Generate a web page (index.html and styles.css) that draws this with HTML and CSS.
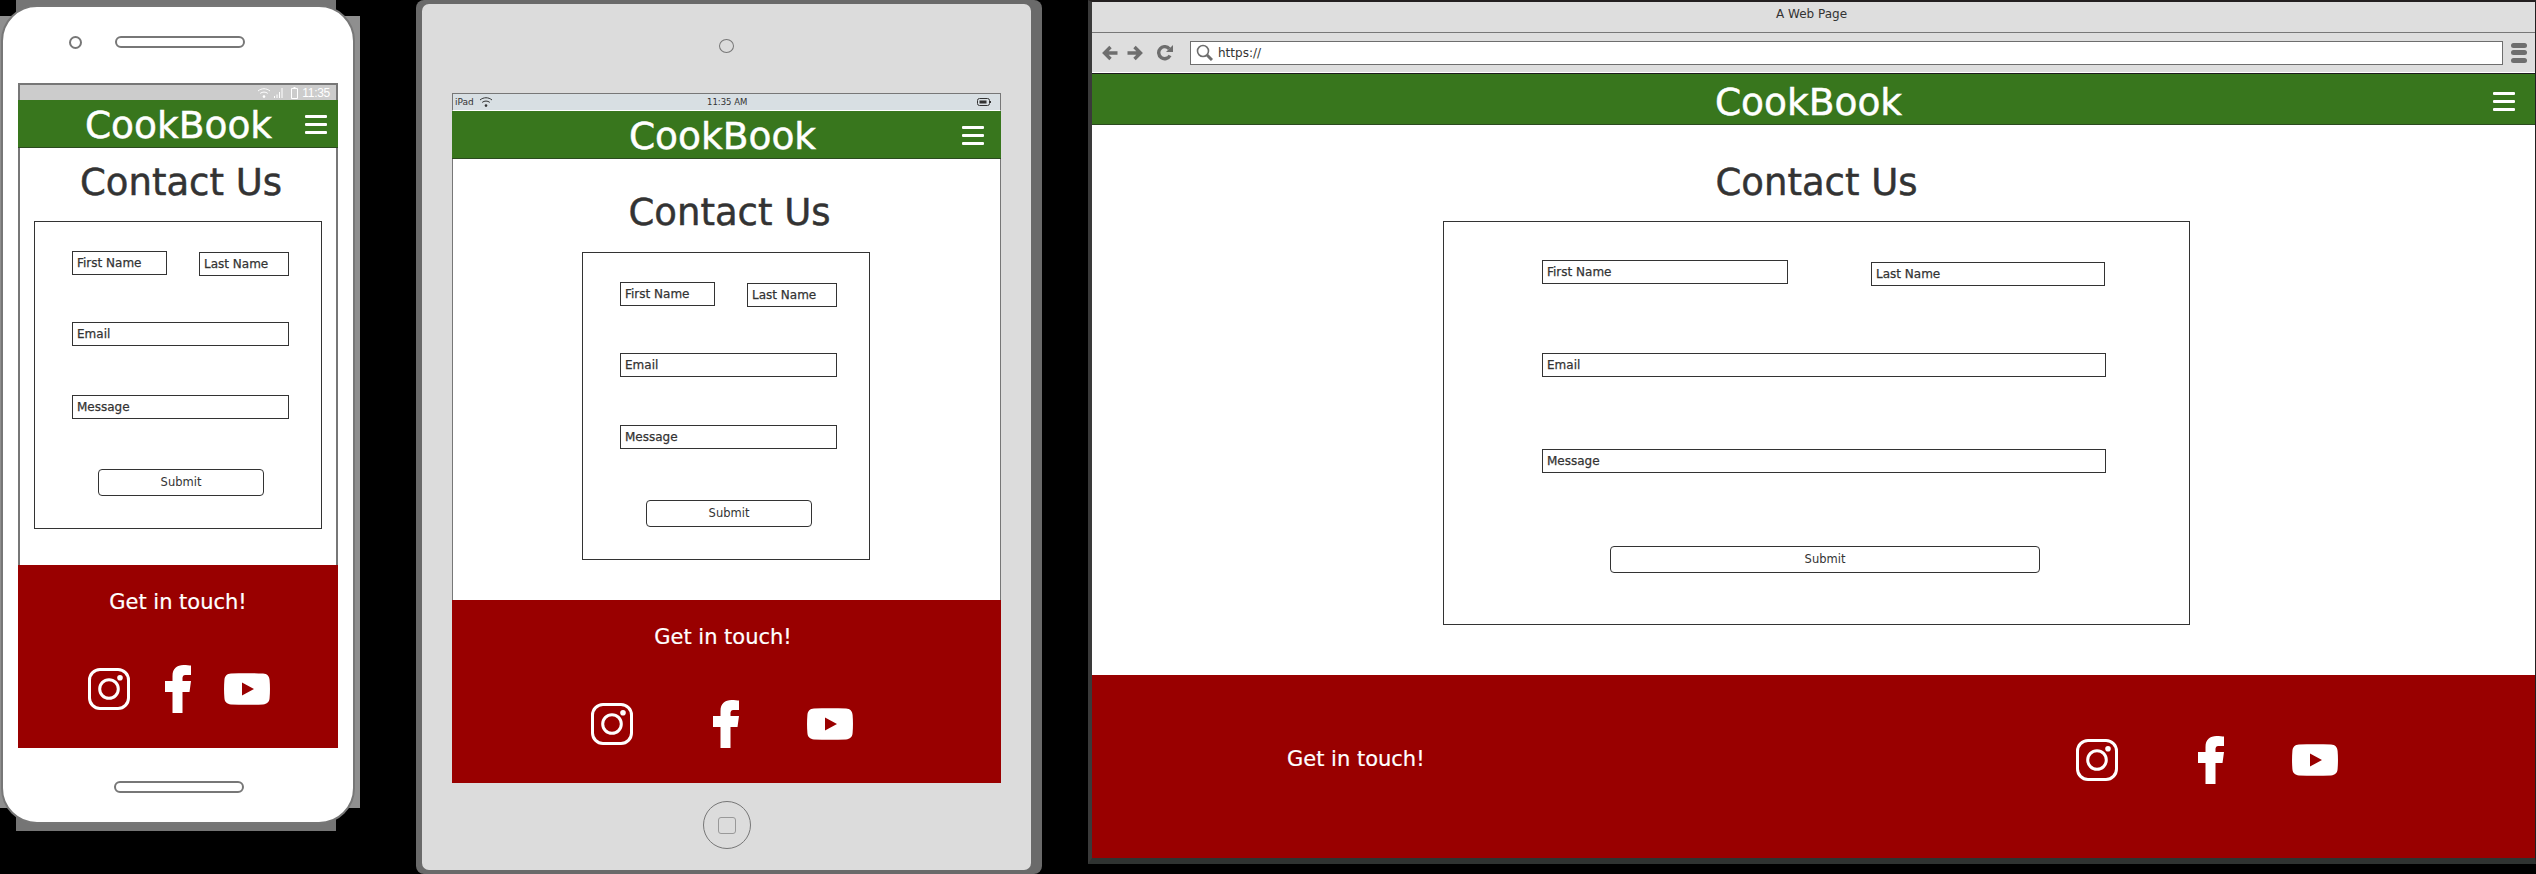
FILE: index.html
```html
<!DOCTYPE html>
<html lang="en">
  <head>
    <meta charset="UTF-8" />
    <meta name="viewport" content="width=device-width, initial-scale=1.0" />
    <title>CookBook Contact Wireframes</title>
    <link rel="stylesheet" href="styles.css">
  </head>
  <body>
    <svg class="icon-defs" aria-hidden="true">
      <symbol id="instagram" viewBox="0 0 42 42">
        <rect x="1.5" y="1.5" width="39" height="39" rx="10.5" fill="none" stroke="currentColor" stroke-width="3" />
        <circle cx="21" cy="21" r="9.3" fill="none" stroke="currentColor" stroke-width="3" />
        <circle cx="32" cy="9.8" r="2.8" fill="currentColor" />
      </symbol>
      <symbol id="facebook" viewBox="0 0 26 48">
        <path fill="currentColor" d="M7.5 48V27H0V16H7.5V11C7.5 3.5 12 0 18.5 0C21.5 0 24.5 .3 26 .6V10H21C18 10 17.5 11.5 17.5 14V16H26L24.5 27H17.5V48Z" />
      </symbol>
      <symbol id="youtube" viewBox="0 0 46 32">
        <path fill="currentColor" fill-rule="evenodd" d="M7 .6C17 0 29 0 39 .6C43 .9 45.3 3 45.6 7C46.1 13 46.1 19 45.6 25C45.3 29 43 31.1 39 31.4C29 32 17 32 7 31.4C3 31.1 .7 29 .4 25C-.1 19 -.1 13 .4 7C.7 3 3 .9 7 .6ZM18 9.5V22.5L30 16Z" />
      </symbol>
      <symbol id="wifi" viewBox="0 0 14 12">
        <path fill="none" stroke="currentColor" stroke-width="1" d="M1 4C4.5 1 9.5 1 13 4M3.2 6.4C5.5 4.6 8.5 4.6 10.8 6.4" />
        <circle cx="7" cy="9.6" r="1.3" fill="currentColor" />
      </symbol>
    </svg>

    <div class="phone-frame">
      <div class="phone">
        <div class="phone-top">
          <span class="phone-camera"></span>
          <span class="phone-speaker"></span>
        </div>
        <div class="screen">
          <div class="status-bar">
            <svg class="status-wifi"><use href="#wifi" /></svg>
            <svg class="status-signal" viewBox="0 0 11 10">
              <path fill="none" stroke="currentColor" d="M1.5 10V8M4 10V6.5M6.5 10V4M9 10V0" />
            </svg>
            <svg class="status-battery" viewBox="0 0 7 12">
              <path fill="none" stroke="currentColor" d="M.5 1.5H6.5V11.5H.5ZM2.5 .5H4.5" />
            </svg>
            <span class="status-time">11:35</span>
          </div>
          <header class="app-header">
            <div class="logo">CookBook</div>
            <div class="burger"><span></span><span></span><span></span></div>
          </header>
          <main class="page">
            <h1>Contact Us</h1>
            <div class="contact-form">
              <div class="name-row">
                <div class="field first-name">First Name</div>
                <div class="field last-name">Last Name</div>
              </div>
              <div class="field email">Email</div>
              <div class="field message">Message</div>
              <div class="submit">Submit</div>
            </div>
          </main>
          <footer class="app-footer">
            <div class="touch">Get in touch!</div>
            <div class="social">
              <svg class="icon-instagram"><use href="#instagram" /></svg>
              <svg class="icon-facebook"><use href="#facebook" /></svg>
              <svg class="icon-youtube"><use href="#youtube" /></svg>
            </div>
          </footer>
        </div>
        <span class="phone-speaker phone-speaker-bottom"></span>
      </div>
    </div>

    <div class="tablet-frame">
      <div class="tablet">
        <div class="tablet-camera"></div>
        <div class="screen">
          <div class="status-bar">
            <span class="status-carrier">iPad</span>
            <svg class="status-wifi"><use href="#wifi" /></svg>
            <span class="status-clock">11:35 AM</span>
            <svg class="status-battery" viewBox="0 0 14 8">
              <rect x=".5" y=".5" width="12" height="7" rx="2" fill="none" stroke="currentColor" />
              <rect x="2.5" y="2.5" width="7" height="3" fill="currentColor" />
              <rect x="13" y="3" width="1" height="2" fill="currentColor" />
            </svg>
          </div>
          <header class="app-header">
            <div class="logo">CookBook</div>
            <div class="burger"><span></span><span></span><span></span></div>
          </header>
          <main class="page">
            <h1>Contact Us</h1>
            <div class="contact-form">
              <div class="name-row">
                <div class="field first-name">First Name</div>
                <div class="field last-name">Last Name</div>
              </div>
              <div class="field email">Email</div>
              <div class="field message">Message</div>
              <div class="submit">Submit</div>
            </div>
          </main>
          <footer class="app-footer">
            <div class="touch">Get in touch!</div>
            <div class="social">
              <svg class="icon-instagram"><use href="#instagram" /></svg>
              <svg class="icon-facebook"><use href="#facebook" /></svg>
              <svg class="icon-youtube"><use href="#youtube" /></svg>
            </div>
          </footer>
        </div>
        <div class="home-button"><span></span></div>
      </div>
    </div>

    <div class="browser">
      <div class="title-bar">A Web Page</div>
      <div class="tool-bar">
        <svg class="nav-icon" viewBox="0 0 16 16">
          <path fill="none" stroke="currentColor" stroke-width="3.4" d="M15.5 8H3M8.5 2L2.5 8L8.5 14" />
        </svg>
        <svg class="nav-icon" viewBox="0 0 16 16">
          <path fill="none" stroke="currentColor" stroke-width="3.4" d="M.5 8H13M7.5 2L13.5 8L7.5 14" />
        </svg>
        <svg class="nav-icon reload" viewBox="0 0 16 16">
          <path fill="none" stroke="currentColor" stroke-width="3.4" d="M13 10.5A6 6 0 1 1 12.3 3.8" />
          <path fill="currentColor" d="M9 7L16 7L16 0Z" />
        </svg>
        <div class="address">
          <svg class="search-icon" viewBox="0 0 17 17">
            <circle cx="7" cy="7" r="5.5" fill="none" stroke="currentColor" stroke-width="1.6" />
            <path fill="none" stroke="currentColor" stroke-width="3" d="M11 11L16 16" />
          </svg>
          https://
        </div>
        <div class="browser-menu"><span></span><span></span><span></span></div>
      </div>
      <header class="app-header">
        <div class="logo">CookBook</div>
        <div class="burger"><span></span><span></span><span></span></div>
      </header>
      <main class="page">
        <h1>Contact Us</h1>
        <div class="contact-form">
          <div class="name-row">
            <div class="field first-name">First Name</div>
            <div class="field last-name">Last Name</div>
          </div>
          <div class="field email">Email</div>
          <div class="field message">Message</div>
          <div class="submit">Submit</div>
        </div>
      </main>
      <footer class="app-footer">
        <div class="touch">Get in touch!</div>
        <div class="social">
          <svg class="icon-instagram"><use href="#instagram" /></svg>
          <svg class="icon-facebook"><use href="#facebook" /></svg>
          <svg class="icon-youtube"><use href="#youtube" /></svg>
        </div>
      </footer>
    </div>
  </body>
</html>
```

FILE: styles.css
```css
* {
  box-sizing: border-box;
}

html,
body {
  margin: 0;
  padding: 0;
  height: 874px;
  overflow: hidden;
  background-color: #000;
  font-family: "DejaVu Sans", sans-serif;
  color: #333;
}

.icon-defs {
  display: none;
}

/* the three devices sit on a free canvas */
.phone-frame,
.tablet-frame,
.browser {
  position: absolute;
  top: 0;
}

/* phone */
.phone-frame {
  left: 0;
  width: 360px;
  height: 831px;
  padding: 5px 5px 7px 1px;
}

/* stepped grey shadow behind the phone */
.phone-frame::before,
.phone-frame::after {
  content: "";
  position: absolute;
  background-color: #757575;
}

.phone-frame::before {
  left: 16px;
  width: 320px;
  top: 0;
  bottom: 0;
}

.phone-frame::after {
  left: 0;
  right: 0;
  top: 16px;
  bottom: 23px;
  background-color: #8f8f8f;
}

.phone {
  position: relative;
  z-index: 1;
  width: 354px;
  height: 819px;
  background-color: #fff;
  border: 2px solid #777;
  border-radius: 36px;
}

.phone-top {
  display: flex;
  align-items: center;
  height: 14px;
  margin-top: 28px;
  padding-left: 66px;
  gap: 33px;
}

.phone-camera {
  width: 13px;
  height: 13px;
  border: 2px solid #777;
  border-radius: 50%;
}

.phone-speaker {
  display: block;
  width: 130px;
  height: 12px;
  border: 2px solid #777;
  border-radius: 6px;
}

.phone-speaker-bottom {
  margin: 33px 0 0 111px;
}

.phone .screen {
  width: 320px;
  margin: 34px 0 0 15px;
}

/* tablet */
.tablet-frame {
  left: 416px;
  width: 626px;
  height: 874px;
  padding: 4px 11px 4px 6px;
  background-color: #6a6a6a;
  border-radius: 8px;
}

.tablet {
  height: 866px;
  padding-top: 35px;
  background-color: #dcdcdc;
  border-radius: 7px;
}

.tablet-camera {
  width: 15px;
  height: 14px;
  margin: 0 auto 40px;
  border: 1px solid #777;
  border-radius: 50%;
}

.tablet .screen {
  width: 549px;
  margin-left: 30px;
}

.home-button {
  display: flex;
  align-items: center;
  justify-content: center;
  width: 48px;
  height: 48px;
  margin: 18px auto 0;
  border: 1px solid #777;
  border-radius: 50%;
}

.home-button span {
  width: 18px;
  height: 17px;
  border: 1.5px solid #999;
  border-radius: 3px;
}

/* browser window */
.browser {
  left: 1088px;
  width: 1448px;
  height: 864px;
  background-color: #fff;
  border-top: 2px solid #231f20;
  border-left: 4px solid #3a3a3a;
  border-right: 1px solid #231f20;
  border-bottom: 6px solid #2f3331;
}

.title-bar {
  height: 31px;
  padding-top: 4px;
  padding-right: 4px;
  background-color: #dedede;
  border-bottom: 1px solid #777;
  font-size: 12px;
  line-height: 16px;
  text-align: center;
}

.tool-bar {
  display: flex;
  align-items: center;
  height: 41px;
  padding: 0 8px 1px 10px;
  background-color: #dedede;
  border-bottom: 1px solid #1c1c1c;
  box-shadow: inset 0 -1px 0 #fff;
  color: #6e6e6e;
}

.nav-icon {
  width: 16px;
  height: 16px;
  margin-right: 9px;
}

.nav-icon.reload {
  margin-right: 17px;
  margin-left: 5px;
}

.address {
  display: flex;
  align-items: center;
  flex: 1;
  height: 24px;
  padding-left: 5px;
  gap: 5px;
  background-color: #fff;
  border: 1px solid #6e6e6e;
  color: #333;
  font-size: 12px;
}

.search-icon {
  width: 17px;
  height: 17px;
  color: #6e6e6e;
}

.browser-menu {
  display: flex;
  flex-direction: column;
  gap: 2.5px;
  width: 16px;
  margin-left: 8px;
}

.browser-menu span {
  height: 5px;
  background-color: #6e6e6e;
  border-radius: 3px;
}

/* status bars */
.status-bar {
  display: flex;
  align-items: center;
}

.phone .status-bar {
  height: 17px;
  padding-right: 6px;
  background-color: #ccc;
  border: 2px solid #777;
  border-bottom: 0;
  color: #fff;
}

.phone .status-wifi {
  width: 14px;
  height: 12px;
  margin-left: auto;
}

.status-signal {
  width: 11px;
  height: 10px;
  margin-left: 2px;
}

.phone .status-battery {
  width: 7px;
  height: 12px;
  margin-left: 7px;
}

.status-time {
  margin-left: 4px;
  font-family: "Liberation Sans", sans-serif;
  font-size: 12px;
  letter-spacing: -0.3px;
}

.tablet .status-bar {
  height: 18px;
  padding: 0 9px 1px 2px;
  background-color: #d8dfe3;
  border: 1px solid #777;
  border-bottom: 1px solid #fff;
  font-size: 9px;
}

.status-carrier {
  width: 24px;
}

.tablet .status-wifi {
  width: 14px;
  height: 12px;
}

.status-clock {
  margin-left: 214px;
  font-size: 8.5px;
}

.tablet .status-battery {
  width: 14px;
  height: 8px;
  margin-left: auto;
}

/* app header */
.app-header {
  display: flex;
  align-items: center;
  height: 48px;
  background-color: #38761d;
  border-bottom: 1px solid #2b4a1f;
  color: #fff;
}

.phone .app-header {
  padding: 0 11px 0 34px;
}

.tablet .app-header {
  padding: 0 17px 0 31px;
}

.browser .app-header {
  height: 51px;
  padding: 0 20px 0 32px;
}

.logo {
  flex: 1;
  padding-top: 2px;
  font-size: 37.5px;
  line-height: 44px;
  text-align: center;
  -webkit-text-stroke: 0.5px #fff;
}

.browser .logo {
  padding-top: 5px;
}

.burger {
  display: flex;
  flex-direction: column;
  gap: 5px;
  width: 22px;
  margin-top: 2px;
}

.browser .burger {
  margin-top: 5px;
}

.burger span {
  height: 3px;
  background-color: #fff;
  border-radius: 1px;
}

/* page */
.page {
  height: 417px;
  padding-top: 13px;
  background-color: #fff;
}

.phone .page {
  border-left: 2px solid #777;
  border-right: 2px solid #777;
}

.tablet .page {
  height: 441px;
  padding-top: 32px;
  border-left: 1px solid #777;
  border-right: 1px solid #777;
}

.browser .page {
  height: 550px;
  padding-top: 36px;
}

h1 {
  margin: 0 0 16px;
  padding-left: 6px;
  font-size: 37px;
  font-weight: normal;
  line-height: 44px;
  text-align: center;
  -webkit-text-stroke: 0.5px #333;
}

.tablet h1 {
  margin-bottom: 17px;
}

.contact-form {
  display: flex;
  flex-direction: column;
  align-items: flex-start;
  width: 288px;
  height: 308px;
  margin: 0 auto;
  padding: 29px 0 0 37px;
  border: 1px solid #333;
}

.tablet .contact-form {
  margin-left: 129px;
}

.browser .contact-form {
  width: 747px;
  height: 404px;
  margin-left: 351px;
  padding: 38px 0 0 98px;
}

.name-row {
  display: flex;
  justify-content: space-between;
  width: 217px;
  height: 25px;
}

.browser .name-row {
  width: 563px;
  height: 26px;
}

.field {
  width: 217px;
  height: 24px;
  padding-left: 4px;
  border: 1px solid #333;
  font-size: 12px;
  line-height: 23px;
  -webkit-text-stroke: 0.25px #333;
}

.first-name {
  width: 95px;
}

.last-name {
  width: 90px;
  margin-top: 1px;
}

.browser .first-name {
  width: 246px;
}

.browser .last-name {
  width: 234px;
  margin-top: 2px;
}

.email {
  margin-top: 46px;
}

.message {
  margin-top: 49px;
}

.tablet .message {
  margin-top: 48px;
}

.browser .email,
.browser .message {
  width: 564px;
}

.browser .email {
  margin-top: 67px;
}

.browser .message {
  margin-top: 72px;
}

.submit {
  width: 166px;
  height: 27px;
  margin: 50px 0 0 26px;
  border: 1px solid #333;
  border-radius: 4px;
  font-size: 11.5px;
  line-height: 24px;
  text-align: center;
}

.tablet .submit {
  margin-top: 51px;
}

.browser .submit {
  width: 430px;
  margin: 73px 0 0 68px;
}

/* footer */
.app-footer {
  height: 183px;
  padding-top: 22px;
  background-color: #990000;
  color: #fff;
}

.touch {
  font-size: 21px;
  line-height: 30px;
  text-align: center;
  -webkit-text-stroke: 0.2px #fff;
}

.tablet .touch {
  padding-right: 7px;
}

.social {
  display: flex;
  align-items: center;
  height: 48px;
  margin-top: 48px;
  padding-left: 70px;
  gap: 35px;
}

.tablet .social {
  padding-left: 139px;
  gap: 80px;
}

.icon-instagram {
  width: 42px;
  height: 42px;
}

.icon-facebook {
  width: 26px;
  height: 48px;
}

.icon-youtube {
  width: 46px;
  height: 32px;
  margin-left: -2px;
}

.tablet .icon-youtube,
.browser .icon-youtube {
  margin-left: -12px;
}

.browser .app-footer {
  display: flex;
  align-items: flex-start;
  padding: 61px 197px 0 195px;
}

.browser .touch {
  margin-top: 8px;
}

.browser .social {
  margin: 0 0 0 auto;
  padding-left: 0;
  gap: 80px;
}
```
